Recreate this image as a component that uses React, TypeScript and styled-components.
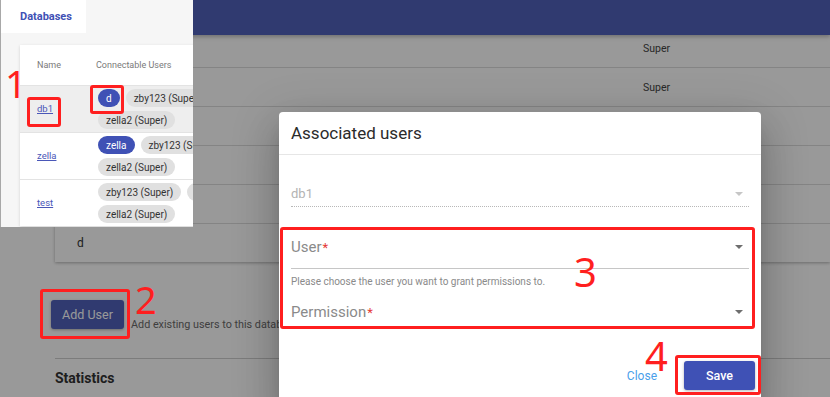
import React from "react";
import styled, { createGlobalStyle } from "styled-components";

const GlobalStyle = createGlobalStyle`
  html, body { margin: 0; padding: 0; }
  body {
    font-family: Roboto, "Liberation Sans", Arial, sans-serif;
    background: #fff;
  }
`;

interface Member {
  label: string;
  owner?: boolean;
}

interface DbEntry {
  name: string;
  users: Member[];
}

const pageUsers = [
  { name: "zby123", role: "Super" },
  { name: "zella2", role: "Super" },
  { name: "zella", role: "Super" },
  { name: "root", role: "Super" },
  { name: "admin", role: "Super" },
  { name: "d", role: "Normal" },
];

const databases: DbEntry[] = [
  {
    name: "db1",
    users: [{ label: "d", owner: true }, { label: "zby123 (Super)" }, { label: "zella2 (Super)" }],
  },
  {
    name: "zella",
    users: [{ label: "zella", owner: true }, { label: "zby123 (Super)" }, { label: "zella2 (Super)" }],
  },
  {
    name: "test",
    users: [{ label: "zby123 (Super)" }, { label: "zella (Super)" }, { label: "zella2 (Super)" }],
  },
];

const App: React.FC = () => {
  return (
    <>
      <GlobalStyle />
      <Page>
        <AppBar />
        <Main>
          <UsersCard>
            {pageUsers.map((u) => (
              <UserRow key={u.name}>
                <span>{u.name}</span>
                <RoleCell>{u.role}</RoleCell>
              </UserRow>
            ))}
          </UsersCard>
          <ActionRow>
            <Highlight $t={-11} $r={-6} $b={-10} $l={-11}>
              <NavyButton>Add User</NavyButton>
              <Tag $x={84} $y={-20} $size={38}>2</Tag>
            </Highlight>
            <Hint>Add existing users to this database.</Hint>
          </ActionRow>
          <Divider />
          <SectionTitle>Statistics</SectionTitle>
        </Main>

        <Backdrop />

        <Dialog>
          <DialogTitle>Associated users</DialogTitle>
          <DialogBody>
            <SelectBox $disabled $gap={26} $height={25} $padBottom={0}>
              <DisabledValue>db1</DisabledValue>
              <Caret $muted />
            </SelectBox>
            <Highlight $block $t={-9} $r={-6} $b={-2} $l={-11}>
              <SelectBox $gap={29} $height={32} $padBottom={10}>
                <Label>
                  User<Req>*</Req>
                </Label>
                <Caret />
              </SelectBox>
              <Helper>Please choose the user you want to grant permissions to.</Helper>
              <SelectBox $gap={9} $height={28} $padBottom={0}>
                <Label>
                  Permission<Req>*</Req>
                </Label>
                <Caret />
              </SelectBox>
              <Tag $x={283} $y={16} $size={40}>3</Tag>
            </Highlight>
          </DialogBody>
          <Footer>
            <CloseLink>Close</CloseLink>
            <Highlight $t={-6} $r={-6} $b={-5} $l={-9}>
              <SaveButton>Save</SaveButton>
              <Tag $x={-39} $y={-25} $size={40}>4</Tag>
            </Highlight>
          </Footer>
        </Dialog>

        <Inset>
          <TabBar>
            <Tab>Databases</Tab>
          </TabBar>
          <DbCard>
            <DbHead>
              <span>Name</span>
              <span>Connectable Users</span>
            </DbHead>
            {databases.map((db, i) => (
              <DbRow key={db.name} $active={i === 0}>
                <NameCell>
                  {i === 0 ? (
                    <Highlight $t={-5} $r={-8} $b={-11} $l={-10}>
                      <DbLink>{db.name}</DbLink>
                      <Tag $x={-32} $y={-38} $size={38}>1</Tag>
                    </Highlight>
                  ) : (
                    <DbLink>{db.name}</DbLink>
                  )}
                </NameCell>
                <ChipList>
                  {db.users.map((m, j) =>
                    i === 0 && j === 0 ? (
                      <Highlight key={m.label} $t={-4} $r={-4} $b={-7} $l={-8}>
                        <Chip $owner={m.owner}>{m.label}</Chip>
                      </Highlight>
                    ) : (
                      <Chip key={m.label} $owner={m.owner}>
                        {m.label}
                      </Chip>
                    )
                  )}
                </ChipList>
              </DbRow>
            ))}
          </DbCard>
        </Inset>
      </Page>
    </>
  );
};

export default App;

const Page = styled.div`
  position: relative;
  width: 830px;
  height: 397px;
  overflow: hidden;
  background: #fff;
`;

const AppBar = styled.header`
  position: relative;
  z-index: 1;
  height: 35px;
  background: #5061bb;
  box-shadow: 0 2px 4px rgba(0, 0, 0, 0.25);
`;

const Main = styled.main`
  padding-left: 55px;
`;

const UsersCard = styled.section`
  margin-top: -6px;
  background: #fff;
  box-shadow: 0 1px 3px rgba(0, 0, 0, 0.3);
`;

const UserRow = styled.div`
  display: grid;
  grid-template-columns: 566px 1fr;
  align-items: center;
  height: 38px;
  padding-left: 22px;
  border-bottom: 1px solid #dcdcdc;
  font-size: 12px;
  color: #333;
  &:last-child {
    border-bottom: none;
  }
`;

const RoleCell = styled.span`
  font-size: 10.5px;
  color: #444;
`;

const ActionRow = styled.div`
  display: flex;
  align-items: flex-end;
  gap: 7px;
  margin: 38px 0 0 -4px;
`;

const NavyButton = styled.button`
  width: 73px;
  height: 29px;
  border: none;
  border-radius: 3px;
  background: #5061bb;
  color: #fff;
  font-family: inherit;
  font-size: 12.5px;
  box-shadow: 0 1px 3px rgba(0, 0, 0, 0.3);
`;

const Hint = styled.span`
  margin-bottom: -3px;
  font-size: 10.8px;
  line-height: 14px;
  color: #6a6a6a;
  white-space: nowrap;
`;

const Divider = styled.hr`
  margin: 29px 0 0;
  border: none;
  height: 1px;
  background: #cfcfcf;
`;

const SectionTitle = styled.h3`
  margin: 11px 0 0;
  font-size: 14px;
  font-weight: 700;
  color: #333;
`;

const Backdrop = styled.div`
  position: absolute;
  inset: 0;
  z-index: 5;
  background: rgba(0, 0, 0, 0.4);
`;

const Dialog = styled.div`
  position: absolute;
  left: 279px;
  top: 112px;
  z-index: 6;
  width: 482px;
  height: 300px;
  background: #fff;
  border-radius: 4px;
  box-shadow: 0 11px 15px -7px rgba(0, 0, 0, 0.2), 0 24px 38px 3px rgba(0, 0, 0, 0.14),
    0 9px 46px 8px rgba(0, 0, 0, 0.12);
`;

const DialogTitle = styled.div`
  display: flex;
  align-items: center;
  height: 42px;
  padding: 0 12px;
  border-bottom: 1px solid #e6e6e6;
  font-size: 17px;
  color: #2b2b2b;
`;

const DialogBody = styled.div`
  padding: 0 12px;
`;

const SelectBox = styled.div<{ $disabled?: boolean; $gap: number; $height: number; $padBottom: number }>`
  display: flex;
  align-items: center;
  justify-content: space-between;
  box-sizing: border-box;
  margin-top: ${(p) => p.$gap}px;
  height: ${(p) => p.$height + 1}px;
  padding-bottom: ${(p) => p.$padBottom}px;
  border-bottom: 1px ${(p) => (p.$disabled ? "dotted #b8b8b8" : "solid #c6c6c6")};
`;

const DisabledValue = styled.span`
  font-size: 13px;
  color: #b3b3b3;
`;

const Label = styled.span`
  font-size: 15px;
  color: #8a8a8a;
`;

const Req = styled.span`
  margin-left: 1px;
  font-size: 13px;
  color: #e53935;
`;

const Caret = styled.span<{ $muted?: boolean }>`
  width: 0;
  height: 0;
  margin-right: 6px;
  border-left: 4px solid transparent;
  border-right: 4px solid transparent;
  border-top: 4px solid ${(p) => (p.$muted ? "#c6c6c6" : "#6e6e6e")};
`;

const Helper = styled.div`
  margin-top: 6px;
  font-size: 10px;
  line-height: 14px;
  color: #8a8a8a;
`;

const Footer = styled.div`
  display: flex;
  justify-content: flex-end;
  align-items: center;
  gap: 27px;
  padding: 34px 6px 0 0;
`;

const CloseLink = styled.span`
  font-size: 12px;
  color: #4aa0ea;
`;

const SaveButton = styled.button`
  width: 71px;
  height: 29px;
  border: none;
  border-radius: 3px;
  background: #3f51b5;
  color: #fff;
  font-family: inherit;
  font-size: 12.5px;
  font-weight: 500;
  box-shadow: 0 1px 3px rgba(0, 0, 0, 0.3);
`;

const Inset = styled.aside`
  position: absolute;
  left: 0;
  top: 0;
  z-index: 7;
  width: 193px;
  height: 227px;
  box-sizing: border-box;
  overflow: hidden;
  background: #f6f6f6;
  border-left: 1px solid #a8a8a8;
`;

const TabBar = styled.div`
  display: flex;
  height: 33px;
`;

const Tab = styled.div`
  display: flex;
  align-items: center;
  width: 85px;
  padding-left: 19px;
  box-sizing: border-box;
  background: #fff;
  font-size: 11px;
  font-weight: 700;
  color: #3f51b5;
`;

const DbCard = styled.div`
  width: 320px;
  margin: 12px 0 0 19px;
  background: #fff;
  box-shadow: 0 1px 3px rgba(0, 0, 0, 0.15);
`;

const DbHead = styled.div`
  display: grid;
  grid-template-columns: 59px 1fr;
  align-items: center;
  height: 40px;
  padding-left: 17px;
  font-size: 9px;
  color: #7a7a7a;
`;

const DbRow = styled.div<{ $active?: boolean }>`
  display: grid;
  grid-template-columns: 61px 175px;
  align-items: center;
  padding: 3px 0 3px 17px;
  border-top: 1px solid #e3e3e3;
  background: ${(p) => (p.$active ? "#eeeeee" : "#fff")};
`;

const NameCell = styled.div`
  display: flex;
  align-items: center;
`;

const DbLink = styled.a`
  font-size: 9.5px;
  line-height: 14px;
  color: #4a57b8;
  text-decoration: underline;
`;

const ChipList = styled.div`
  display: flex;
  flex-wrap: wrap;
  gap: 4px 6px;
`;

const Chip = styled.span<{ $owner?: boolean }>`
  display: inline-flex;
  align-items: center;
  height: 18px;
  padding: 0 8px;
  border-radius: 9px;
  font-size: 10px;
  white-space: nowrap;
  background: ${(p) => (p.$owner ? "#3f51b5" : "#e0e0e0")};
  color: ${(p) => (p.$owner ? "#fff" : "#333")};
`;

const Highlight = styled.span<{ $t: number; $r: number; $b: number; $l: number; $block?: boolean }>`
  position: relative;
  display: ${(p) => (p.$block ? "block" : "inline-flex")};
  &::after {
    content: "";
    position: absolute;
    top: ${(p) => p.$t}px;
    right: ${(p) => p.$r}px;
    bottom: ${(p) => p.$b}px;
    left: ${(p) => p.$l}px;
    z-index: 8;
    border: 3px solid #ff1f1f;
    border-radius: 3px;
    pointer-events: none;
  }
`;

const Tag = styled.span<{ $x: number; $y: number; $size: number }>`
  position: absolute;
  left: ${(p) => p.$x}px;
  top: ${(p) => p.$y}px;
  z-index: 8;
  font-family: "Noto Sans", "DejaVu Sans", sans-serif;
  font-size: ${(p) => p.$size}px;
  line-height: 1;
  color: #ff1f1f;
`;
